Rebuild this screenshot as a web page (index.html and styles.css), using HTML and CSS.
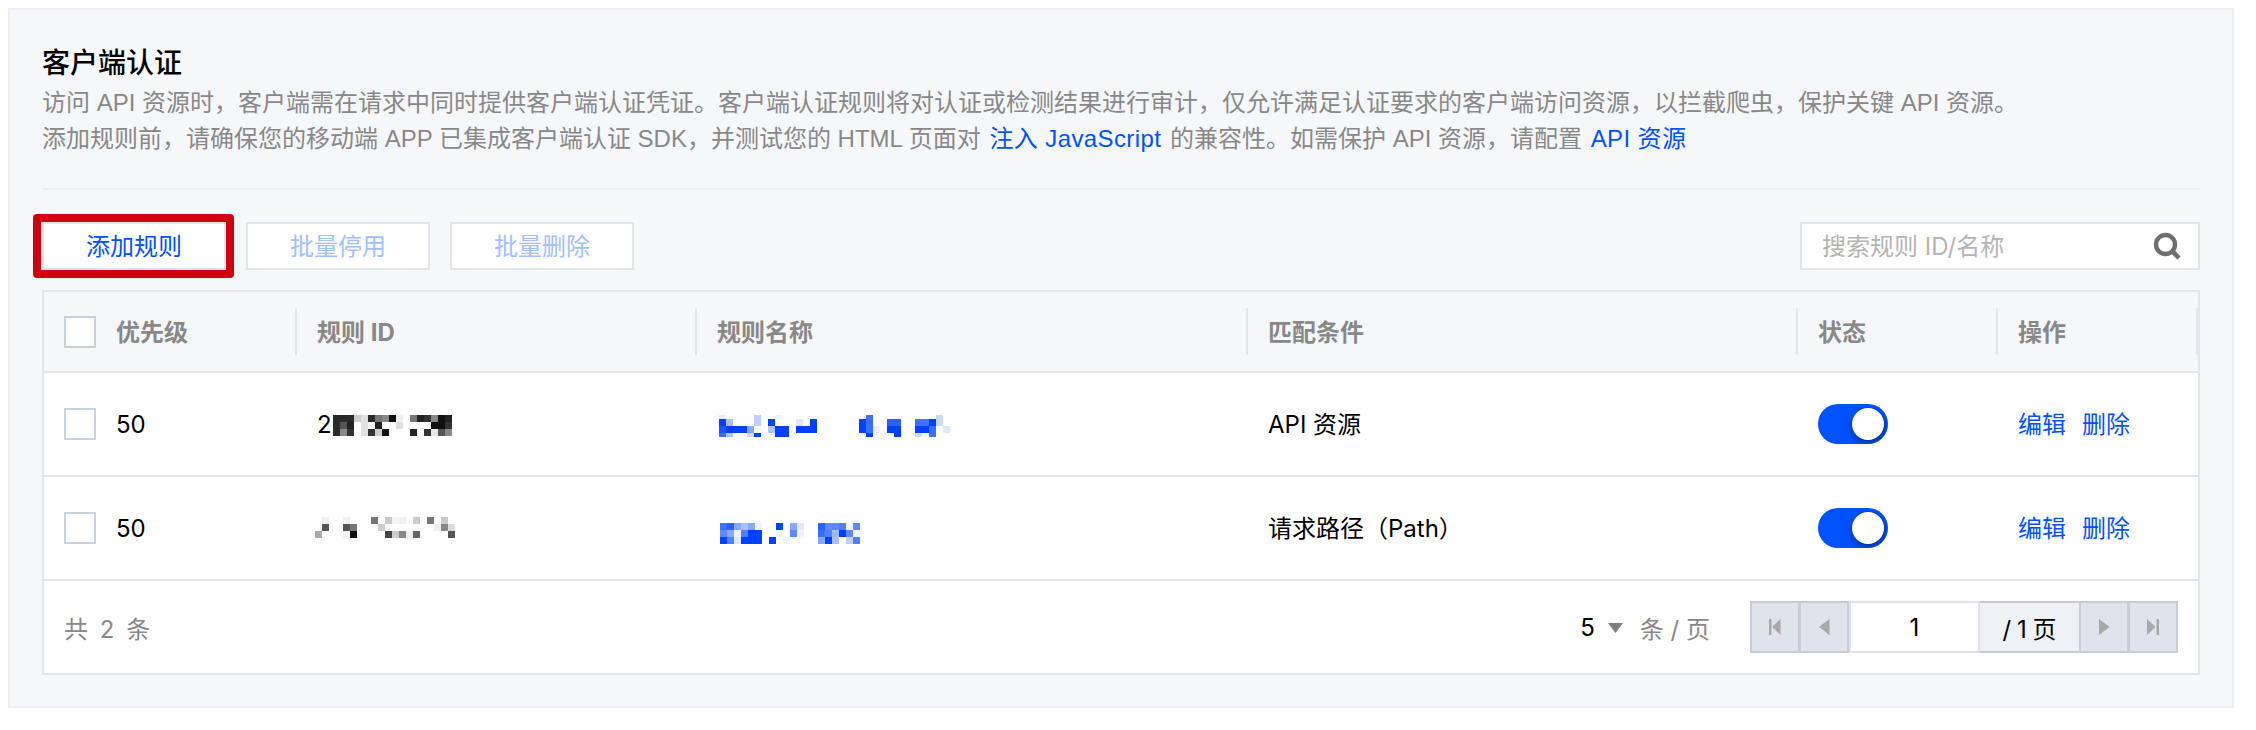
FILE: index.html
```html
<!DOCTYPE html>
<html lang="zh-CN">
<head>
  <meta charset="UTF-8" />
  <title>客户端认证</title>
  <link rel="stylesheet" href="styles.css">
</head>
<body>
  <section class="panel">
    <h2 class="panel-title">客户端认证</h2>
    <p class="panel-desc">访问 API 资源时，客户端需在请求中同时提供客户端认证凭证。客户端认证规则将对认证或检测结果进行审计，仅允许满足认证要求的客户端访问资源，以拦截爬虫，保护关键 API 资源。</p>
    <p class="panel-desc">添加规则前，请确保您的移动端 APP 已集成客户端认证 SDK，并测试您的 HTML 页面对 <a class="link link-spaced" href="#">注入 JavaScript</a> 的兼容性。如需保护 API 资源，请配置 <a class="link link-spaced" href="#">API 资源</a></p>
    <hr class="divider">

    <div class="toolbar">
      <button class="btn btn-marked">添加规则</button>
      <button class="btn" disabled>批量停用</button>
      <button class="btn" disabled>批量删除</button>
      <div class="search">
        <span class="search-text">搜索规则 ID/名称</span>
        <svg class="search-icon" viewBox="0 0 28 28"><circle cx="12.5" cy="12.5" r="9.5" fill="none" stroke="#6f6f6f" stroke-width="4.4"/><path d="M19 19l7 7" stroke="#6f6f6f" stroke-width="4.6"/></svg>
      </div>
    </div>

    <div class="table">
      <div class="row row-head">
        <div class="cell"><span class="check"></span>优先级</div>
        <div class="cell">规则 ID</div>
        <div class="cell">规则名称</div>
        <div class="cell">匹配条件</div>
        <div class="cell">状态</div>
        <div class="cell">操作</div>
      </div>

      <div class="row">
        <div class="cell"><span class="check"></span>50</div>
        <div class="cell">2
          <svg class="mosaic mosaic-id" width="119" height="21" viewBox="0 0 119 21">
            <rect x="0" y="0" fill="#2a2a2a"/><rect x="7" y="0" fill="#2a2a2a"/><rect x="14" y="0" fill="#2a2a2a"/><rect x="21" y="0" fill="#ccc"/><rect x="28" y="0" fill="#e0e0e0"/><rect x="35" y="0" fill="#2a2a2a"/><rect x="42" y="0" fill="#777"/><rect x="49" y="0" fill="#888"/><rect x="56" y="0" fill="#111"/><rect x="63" y="0" fill="#eee"/><rect x="77" y="0" fill="#777"/><rect x="84" y="0" fill="#222"/><rect x="91" y="0" fill="#333"/><rect x="98" y="0" fill="#888"/><rect x="105" y="0" fill="#111"/><rect x="112" y="0" fill="#222"/>
            <rect x="0" y="7" fill="#2a2a2a"/><rect x="7" y="7" fill="#555"/><rect x="14" y="7" fill="#222"/><rect x="28" y="7" fill="#e0e0e0"/><rect x="42" y="7" fill="#222"/><rect x="63" y="7" fill="#e0e0e0"/><rect x="98" y="7" fill="#111"/><rect x="105" y="7" fill="#111"/><rect x="112" y="7" fill="#333"/>
            <rect x="0" y="14" fill="#2a2a2a"/><rect x="7" y="14" fill="#888"/><rect x="14" y="14" fill="#333"/><rect x="28" y="14" fill="#e0e0e0"/><rect x="35" y="14" fill="#333"/><rect x="42" y="14" fill="#ccc"/><rect x="49" y="14" fill="#111"/><rect x="77" y="14" fill="#222"/><rect x="91" y="14" fill="#333"/><rect x="98" y="14" fill="#e8e8e8"/><rect x="105" y="14" fill="#555"/><rect x="112" y="14" fill="#888"/>
          </svg>
        </div>
        <div class="cell">
          <svg class="mosaic mosaic-name" width="231" height="22" viewBox="0 0 231 22">
            <rect class="short" x="0" y="0" fill="#e8eeff"/><rect class="short" x="35" y="0" fill="#c0d0ff"/><rect class="short" x="56" y="0" fill="#eef2ff"/><rect class="short" x="147" y="0" fill="#4070ff"/><rect class="short" x="217" y="0" fill="#ccd8ff"/>
            <rect x="0" y="4" fill="#0040ff"/><rect x="7" y="4" fill="#a8c0ff"/><rect x="35" y="4" fill="#c0d0ff"/><rect x="49" y="4" fill="#0040ff"/><rect x="77" y="4" fill="#e0e8ff"/><rect x="91" y="4" fill="#0040ff"/><rect x="140" y="4" fill="#0040ff"/><rect x="147" y="4" fill="#3a70ff"/><rect x="168" y="4" fill="#2a60ff"/><rect x="175" y="4" fill="#2a60ff"/><rect x="196" y="4" fill="#4070ff"/><rect x="203" y="4" fill="#4070ff"/><rect x="210" y="4" fill="#0040ff"/><rect x="217" y="4" fill="#ccd8ff"/>
            <rect x="0" y="11" fill="#1a50ff"/><rect x="7" y="11" fill="#0040ff"/><rect x="14" y="11" fill="#0040ff"/><rect x="21" y="11" fill="#0040ff"/><rect x="28" y="11" fill="#8aa8ff"/><rect x="49" y="11" fill="#b0c4ff"/><rect x="56" y="11" fill="#0040ff"/><rect x="63" y="11" fill="#0040ff"/><rect x="77" y="11" fill="#0040ff"/><rect x="84" y="11" fill="#0040ff"/><rect x="91" y="11" fill="#0040ff"/><rect x="140" y="11" fill="#0040ff"/><rect x="147" y="11" fill="#3a70ff"/><rect x="154" y="11" fill="#e8eeff"/><rect x="168" y="11" fill="#0040ff"/><rect x="175" y="11" fill="#0040ff"/><rect x="196" y="11" fill="#0040ff"/><rect x="203" y="11" fill="#0040ff"/><rect x="210" y="11" fill="#3a70ff"/><rect x="224" y="11" fill="#e0e8ff"/>
            <rect class="short" x="0" y="18" fill="#3a70ff"/><rect class="short" x="7" y="18" fill="#b0c4ff"/><rect class="short" x="28" y="18" fill="#d0dcff"/><rect class="short" x="35" y="18" fill="#0040ff"/><rect class="short" x="56" y="18" fill="#0040ff"/><rect class="short" x="63" y="18" fill="#0040ff"/><rect class="short" x="147" y="18" fill="#0040ff"/><rect class="short" x="175" y="18" fill="#0040ff"/><rect class="short" x="196" y="18" fill="#d0dcff"/><rect class="short" x="210" y="18" fill="#4070ff"/>
          </svg>
        </div>
        <div class="cell">API 资源</div>
        <div class="cell"><span class="switch"><span class="knob"></span></span></div>
        <div class="cell cell-actions"><a class="link" href="#">编辑</a><a class="link" href="#">删除</a></div>
      </div>

      <div class="row">
        <div class="cell"><span class="check"></span>50</div>
        <div class="cell">
          <svg class="mosaic mosaic-id2" width="140" height="21" viewBox="0 0 140 21">
            <rect x="7" y="0" fill="#f0f0f0"/><rect x="28" y="0" fill="#f0f0f0"/><rect x="56" y="0" fill="#777"/><rect x="70" y="0" fill="#ccc"/><rect x="77" y="0" fill="#f4f4f4"/><rect x="84" y="0" fill="#f0f0f0"/><rect x="98" y="0" fill="#ccc"/><rect x="112" y="0" fill="#777"/><rect x="126" y="0" fill="#ccc"/>
            <rect x="7" y="7" fill="#555"/><rect x="28" y="7" fill="#555"/><rect x="35" y="7" fill="#777"/><rect x="63" y="7" fill="#ccc"/><rect x="119" y="7" fill="#eee"/><rect x="126" y="7" fill="#888"/><rect x="133" y="7" fill="#ddd"/>
            <rect x="0" y="14" fill="#aaa"/><rect x="28" y="14" fill="#f4f4f4"/><rect x="35" y="14" fill="#111"/><rect x="70" y="14" fill="#444"/><rect x="77" y="14" fill="#ccc"/><rect x="84" y="14" fill="#888"/><rect x="91" y="14" fill="#eee"/><rect x="98" y="14" fill="#666"/><rect x="133" y="14" fill="#555"/>
          </svg>
        </div>
        <div class="cell">
          <svg class="mosaic mosaic-name2" width="140" height="21" viewBox="0 0 140 21">
            <rect x="0" y="0" fill="#4070ff"/><rect x="7" y="0" fill="#2a60ff"/><rect x="14" y="0" fill="#88a8ff"/><rect x="21" y="0" fill="#a8c0ff"/><rect x="28" y="0" fill="#88a8ff"/><rect x="35" y="0" fill="#f0f4ff"/><rect x="56" y="0" fill="#0040ff"/><rect x="70" y="0" fill="#88a8ff"/><rect x="77" y="0" fill="#e0e8ff"/><rect x="98" y="0" fill="#2a60ff"/><rect x="105" y="0" fill="#6088ff"/><rect x="112" y="0" fill="#6088ff"/><rect x="119" y="0" fill="#5080ff"/><rect x="126" y="0" fill="#f0f4ff"/><rect x="133" y="0" fill="#6088ff"/>
            <rect x="0" y="7" fill="#6088ff"/><rect x="7" y="7" fill="#88a8ff"/><rect x="14" y="7" fill="#eef2ff"/><rect x="21" y="7" fill="#5080ff"/><rect x="28" y="7" fill="#0040ff"/><rect x="35" y="7" fill="#0040ff"/><rect x="56" y="7" fill="#f0f4ff"/><rect x="70" y="7" fill="#6088ff"/><rect x="77" y="7" fill="#f0f4ff"/><rect x="98" y="7" fill="#3a70ff"/><rect x="105" y="7" fill="#5080ff"/><rect x="112" y="7" fill="#a0b8ff"/><rect x="119" y="7" fill="#0040ff"/><rect x="126" y="7" fill="#6088ff"/><rect x="133" y="7" fill="#f0f4ff"/>
            <rect x="0" y="14" fill="#0040ff"/><rect x="7" y="14" fill="#5080ff"/><rect x="14" y="14" fill="#e0e8ff"/><rect x="21" y="14" fill="#0040ff"/><rect x="28" y="14" fill="#0040ff"/><rect x="35" y="14" fill="#0040ff"/><rect x="49" y="14" fill="#0040ff"/><rect x="63" y="14" fill="#f0f4ff"/><rect x="98" y="14" fill="#88a8ff"/><rect x="105" y="14" fill="#0040ff"/><rect x="112" y="14" fill="#a8c0ff"/><rect x="126" y="14" fill="#c0d0ff"/><rect x="133" y="14" fill="#5080ff"/>
          </svg>
        </div>
        <div class="cell">请求路径（Path）</div>
        <div class="cell"><span class="switch"><span class="knob"></span></span></div>
        <div class="cell cell-actions"><a class="link" href="#">编辑</a><a class="link" href="#">删除</a></div>
      </div>

      <div class="table-foot">
        <span class="total">共 2 条</span>
        <div class="page-size">
          <span class="size-value">5</span>
          <svg class="size-caret" width="15" height="10" viewBox="0 0 15 10"><path d="M0 0h15L7.500 10z" fill="#7f7f7f"/></svg>
          <span class="size-unit">条 / 页</span>
        </div>
        <div class="pager">
          <span class="page-btn"><svg width="12" height="16" viewBox="0 0 12 16"><path d="M0 0h2.500v16H0zM11.500 0v16L3 8z" fill="#a8a8a8"/></svg></span>
          <span class="page-btn"><svg width="11" height="16" viewBox="0 0 11 16"><path d="M10.500 0v16L0 8z" fill="#a8a8a8"/></svg></span>
          <span class="page-input">1</span>
          <span class="page-total">/ 1 页</span>
          <span class="page-btn"><svg width="11" height="16" viewBox="0 0 11 16"><path d="M0 0v16L10.500 8z" fill="#a8a8a8"/></svg></span>
          <span class="page-btn"><svg width="12" height="16" viewBox="0 0 12 16"><path d="M0 0v16L8.500 8zM9.500 0H12v16H9.500z" fill="#a8a8a8"/></svg></span>
        </div>
      </div>
    </div>
  </section>
</body>
</html>
```

FILE: styles.css
```css
* {
  margin: 0; padding: 0; box-sizing: border-box;
}
body {
  margin: 8px 22px 0 8px;
  font-family: Inter, "Noto Sans CJK SC", sans-serif;
  font-size: 24px;
  color: #000;
  background: #fff;
}
a {
  text-decoration: none;
}

.panel {
  height: 700px;
  padding: 34px 32px 0;
  background: #f6f7f9;
  border: 2px solid #eceef3;
}
.panel-title {
  font-size: 28px;
  font-weight: 500;
  line-height: 38px;
  color: #000;
}
.panel-title + .panel-desc {
  margin-top: 3px;
}
.panel-desc {
  font-family: "Liberation Sans", "Noto Sans CJK SC", sans-serif;
  line-height: 36px;
  color: #888;
  white-space: nowrap;
}
.link {
  color: #0052ff;
}
.link-spaced {
  margin: 0 2px;
  letter-spacing: 0.4px;
}
.divider {
  margin-top: 31px;
  height: 2px;
  border: 0;
  background: #eceef3;
}

.toolbar {
  display: flex;
  gap: 20px;
  margin-top: 32px;
  height: 48px;
}
.btn {
  position: relative;
  width: 184px;
  height: 48px;
  padding-bottom: 3px;
  font: inherit;
  color: #0052ff;
  background: #fff;
  border: 2px solid #e1e4ea;
}
.btn:disabled {
  color: #a0c0ff;
}
.btn-marked::after {
  content: "";
  position: absolute;
  inset: -10px -10px -10px -11px;
  border: 8px solid #d0000f;
  border-radius: 4px;
}
.search {
  display: flex;
  align-items: center;
  justify-content: space-between;
  width: 400px;
  height: 48px;
  margin-left: auto;
  padding: 0 17px 0 20px;
  background: #fff;
  border: 2px solid #e1e4ea;
}
.search-text {
  margin-bottom: 3px;
  color: #b4b4b4;
}
.search-icon {
  width: 28px;
  height: 28px;
}

.table {
  margin-top: 20px;
  height: 385px;
  background: #fff;
  border: 2px solid #e2e5ec;
}
.row {
  display: grid;
  grid-template-columns: 253px 400px 551px 550px 200px 1fr;
  height: 104px;
  border-bottom: 2px solid #e2e5ec;
}
.row-head {
  height: 81px;
  background: #f6f7f9;
  font-weight: 700;
  color: #888;
}
.cell {
  position: relative;
  display: flex;
  align-items: center;
  padding: 2px 0 0 20px;
  line-height: 36px;
  white-space: nowrap;
}
.row-head .cell::after {
  content: "";
  position: absolute;
  top: 16px;
  right: 0;
  width: 2px;
  height: 47px;
  background: #e2e5ec;
}
.check {
  flex: none;
  width: 32px;
  height: 32px;
  margin: -2px 20px 0 0;
  background: #fff;
  border: 2px solid #c9d0de;
}
.cell-actions {
  gap: 16px;
}

.mosaic {
  display: block;
  flex: none;
}
.mosaic rect {
  width: 7px;
  height: 7px;
}
.mosaic rect.short {
  height: 4px;
}
.mosaic-id {
  margin-left: 1px;
  margin-top: 1px;
}
.mosaic-name {
  margin-left: 2px;
  margin-top: 2px;
}
.mosaic-id2 {
  margin-left: -2px;
  margin-top: -4px;
}
.mosaic-name2 {
  margin-left: 3px;
  margin-top: 8px;
}

.switch {
  display: flex;
  justify-content: flex-end;
  align-items: center;
  width: 70px;
  height: 40px;
  margin-top: -2px;
  padding-right: 4px;
  background: #0052ff;
  border-radius: 20px;
  overflow: hidden;
}
.knob {
  width: 32px;
  height: 32px;
  background: #fff;
  border-radius: 50%;
  box-shadow: 1px 3px 8px rgb(0 0 0 / 0.45);
}

.table-foot {
  display: flex;
  align-items: center;
  height: 92px;
  padding: 0 20px;
}
.total {
  word-spacing: 5px;
  color: #888;
}
.page-size {
  display: flex;
  align-items: center;
  margin-left: auto;
  margin-right: 40px;
}
.size-caret {
  margin: 2px 17px 0 12px;
}
.size-value {
  margin-right: 1px;
}
.size-unit {
  color: #888;
}
.pager {
  display: flex;
  height: 52px;
}
.page-btn {
  display: flex;
  align-items: center;
  justify-content: center;
  width: 50px;
  background: #e0e3eb;
  border: 2px solid #c6ccd8;
}
.page-btn + .page-btn {
  margin-left: -1px;
}
.page-input {
  display: flex;
  align-items: center;
  justify-content: center;
  width: 131px;
  background: #fff;
  border: 2px solid #e0e3eb;
}
.page-total {
  display: flex;
  align-items: center;
  justify-content: center;
  width: 99px;
  background: #eff1f5;
  border-top: 2px solid #c6ccd8;
  border-bottom: 2px solid #c6ccd8;
  word-spacing: -1px;
}
```
